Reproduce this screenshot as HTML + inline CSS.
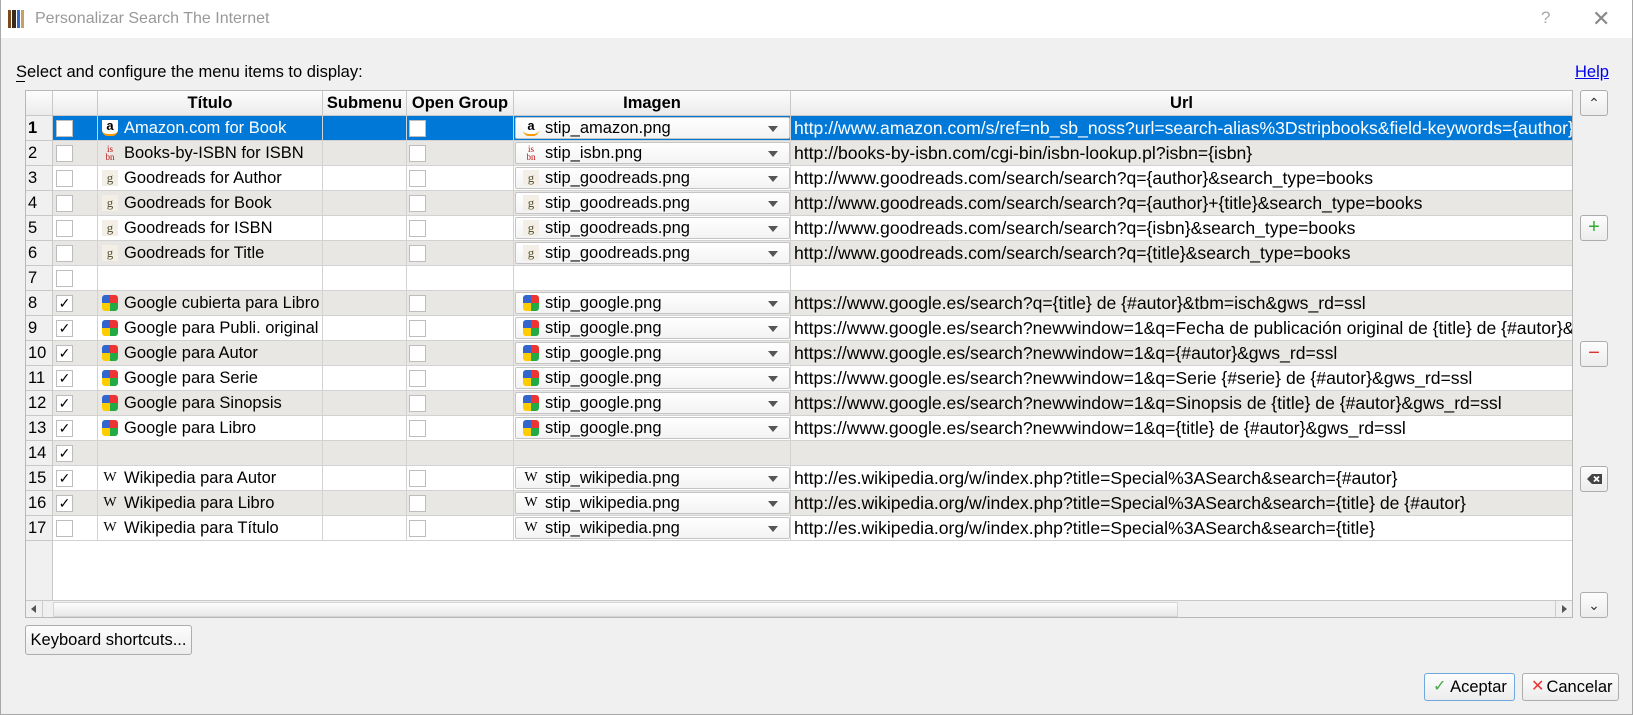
<!DOCTYPE html><html><head><meta charset="utf-8"><style>
*{box-sizing:border-box;margin:0;padding:0}
body{width:1633px;height:715px;overflow:hidden;background:#f0f0f0;font-family:"Liberation Sans",sans-serif;font-size:16.5px;color:#000;position:relative}
.tb{position:absolute;left:0;top:0;width:1633px;height:38px;background:#fff}
.win{position:absolute;left:0;top:0;width:1633px;height:715px;border:1px solid #a8a8a8;border-top:none;pointer-events:none}
.abs{position:absolute}
.tbl{position:absolute;left:25px;top:90px;width:1548px;height:528px;border:1px solid #b8b8b8;background:#fff;overflow:hidden}
.row{position:absolute;left:0;height:25px;display:flex;width:1546px}
.c{height:25px;border-right:1px solid #d2d2d2;border-bottom:1px solid #d2d2d2;white-space:nowrap;overflow:hidden;line-height:24px;position:relative}
.rh{width:27px;background:#f0f0f0;padding-left:2px;border-color:#c8c8c8}
.cb{width:45px}.ti{width:225px;padding-left:26px}.sm{width:84px}.og{width:107px}.im{width:277px}.ur{width:781px;padding-left:3px;border-right:none;font-size:17.6px}
.alt .c{background:#e9e7e3}.alt .rh{background:#f0f0f0}
.sel .c{background:#0078d7;color:#fff}.sel .rh{background:#f0f0f0;color:#000;font-weight:bold}
.chk{position:absolute;left:3px;top:4px;width:17px;height:17px;border:1px solid #bdbdbd;background:#fff;font-size:14px;line-height:15px;text-align:center;color:#000}
.og .chk{left:2px}
.hd{position:absolute;left:0;top:0;height:25px;display:flex;width:1546px}
.hd .c{background:linear-gradient(#fdfdfd,#ebebeb);font-weight:bold;text-align:center;border-color:#c8c8c8;font-size:16.5px}
.ico{position:absolute;left:4px;top:4px;width:16px;height:16px;font-size:12px;line-height:16px;text-align:center}
.combo{position:absolute;left:1px;top:1px;width:275px;height:22px;border:1px solid #c4c4c4;border-radius:2px;background:linear-gradient(#fff,#f3f3f3);color:#000;padding-left:29px;line-height:20px}
.combo .ico{left:7px;top:2px}
.combo:after{content:"";position:absolute;right:11px;top:8px;border-left:5px solid transparent;border-right:5px solid transparent;border-top:6px solid #555}
.g{background:conic-gradient(#e33 0 25%,#2a4 25% 50%,#fc0 50% 75%,#36c 75%);border-radius:3px}
.gr{background:#f3efe6;color:#553;font-family:"Liberation Serif",serif;font-size:13px}
.isbn{color:#b11;font-family:"Liberation Serif",serif;font-size:9px;line-height:8px;padding-top:0}
.wk{font-family:"Liberation Serif",serif;font-size:14px}
.am{font-weight:bold;font-size:13px;line-height:12px;border-bottom:2px solid #f90;border-radius:0 0 6px 6px;background:#fff;color:#000}
.btn{position:absolute;border:1px solid #adadad;border-radius:3px;background:linear-gradient(#fdfdfd,#ececec);text-align:center}
</style></head><body>
<div class="tb"></div>
<div class="abs" style="left:8px;top:10px;width:16px;height:18px;display:flex;gap:1px"><div style="width:4px;background:#7a4a1e"></div><div style="width:4px;background:#3a2a1a"></div><div style="width:4px;background:#3367c8"></div><div style="width:3px;background:#c8a060"></div></div>
<div class="abs" style="left:35px;top:10px;color:#999;font-size:16px">Personalizar Search The Internet</div>
<div class="abs" style="left:1541px;top:8px;color:#aaa;font-size:17px">?</div>
<div class="abs" style="left:1592px;top:6px;color:#888;font-size:22px;font-weight:300">✕</div>
<div class="abs" style="left:16px;top:63px">Select and configure the menu items to display:</div>
<div class="abs" style="left:16px;top:81px;width:9px;height:1px;background:#000"></div>
<div class="abs" style="left:1575px;top:63px;color:#00e;text-decoration:underline">Help</div>

<div class="tbl">
<div class="hd"><div class="c rh"></div><div class="c cb" style="width:45px"></div><div class="c" style="width:225px">Título</div><div class="c" style="width:84px">Submenu</div><div class="c" style="width:107px">Open Group</div><div class="c" style="width:277px">Imagen</div><div class="c" style="width:781px;border-right:none">Url</div></div>

<div class="row sel" style="top:25px"><div class="c rh">1</div><div class="c cb"><div class="chk"></div></div><div class="c ti"><div class="ico am">a</div>Amazon.com for Book</div><div class="c sm"></div><div class="c og"><div class="chk"></div></div><div class="c im"><div class="combo"><div class="ico am">a</div>stip_amazon.png</div></div><div class="c ur">http://www.amazon.com/s/ref=nb_sb_noss?url=search-alias%3Dstripbooks&amp;field-keywords={author}+{title}</div></div>

<div class="row alt" style="top:50px"><div class="c rh">2</div><div class="c cb"><div class="chk"></div></div><div class="c ti"><div class="ico isbn">is<br>bn</div>Books-by-ISBN for ISBN</div><div class="c sm"></div><div class="c og"><div class="chk"></div></div><div class="c im"><div class="combo"><div class="ico isbn">is<br>bn</div>stip_isbn.png</div></div><div class="c ur">http://books-by-isbn.com/cgi-bin/isbn-lookup.pl?isbn={isbn}</div></div>

<div class="row" style="top:75px"><div class="c rh">3</div><div class="c cb"><div class="chk"></div></div><div class="c ti"><div class="ico gr">g</div>Goodreads for Author</div><div class="c sm"></div><div class="c og"><div class="chk"></div></div><div class="c im"><div class="combo"><div class="ico gr">g</div>stip_goodreads.png</div></div><div class="c ur">http://www.goodreads.com/search/search?q={author}&amp;search_type=books</div></div>

<div class="row alt" style="top:100px"><div class="c rh">4</div><div class="c cb"><div class="chk"></div></div><div class="c ti"><div class="ico gr">g</div>Goodreads for Book</div><div class="c sm"></div><div class="c og"><div class="chk"></div></div><div class="c im"><div class="combo"><div class="ico gr">g</div>stip_goodreads.png</div></div><div class="c ur">http://www.goodreads.com/search/search?q={author}+{title}&amp;search_type=books</div></div>

<div class="row" style="top:125px"><div class="c rh">5</div><div class="c cb"><div class="chk"></div></div><div class="c ti"><div class="ico gr">g</div>Goodreads for ISBN</div><div class="c sm"></div><div class="c og"><div class="chk"></div></div><div class="c im"><div class="combo"><div class="ico gr">g</div>stip_goodreads.png</div></div><div class="c ur">http://www.goodreads.com/search/search?q={isbn}&amp;search_type=books</div></div>

<div class="row alt" style="top:150px"><div class="c rh">6</div><div class="c cb"><div class="chk"></div></div><div class="c ti"><div class="ico gr">g</div>Goodreads for Title</div><div class="c sm"></div><div class="c og"><div class="chk"></div></div><div class="c im"><div class="combo"><div class="ico gr">g</div>stip_goodreads.png</div></div><div class="c ur">http://www.goodreads.com/search/search?q={title}&amp;search_type=books</div></div>

<div class="row" style="top:175px"><div class="c rh">7</div><div class="c cb"><div class="chk"></div></div><div class="c ti"></div><div class="c sm"></div><div class="c og"></div><div class="c im"></div><div class="c ur"></div></div>

<div class="row alt" style="top:200px"><div class="c rh">8</div><div class="c cb"><div class="chk">✓</div></div><div class="c ti"><div class="ico g"></div>Google cubierta para Libro</div><div class="c sm"></div><div class="c og"><div class="chk"></div></div><div class="c im"><div class="combo"><div class="ico g"></div>stip_google.png</div></div><div class="c ur">https://www.google.es/search?q={title} de {#autor}&amp;tbm=isch&amp;gws_rd=ssl</div></div>

<div class="row" style="top:225px"><div class="c rh">9</div><div class="c cb"><div class="chk">✓</div></div><div class="c ti"><div class="ico g"></div>Google para Publi. original</div><div class="c sm"></div><div class="c og"><div class="chk"></div></div><div class="c im"><div class="combo"><div class="ico g"></div>stip_google.png</div></div><div class="c ur">https://www.google.es/search?newwindow=1&amp;q=Fecha de publicación original de {title} de {#autor}&amp;gws_rd=ssl</div></div>

<div class="row alt" style="top:250px"><div class="c rh">10</div><div class="c cb"><div class="chk">✓</div></div><div class="c ti"><div class="ico g"></div>Google para Autor</div><div class="c sm"></div><div class="c og"><div class="chk"></div></div><div class="c im"><div class="combo"><div class="ico g"></div>stip_google.png</div></div><div class="c ur">https://www.google.es/search?newwindow=1&amp;q={#autor}&amp;gws_rd=ssl</div></div>

<div class="row" style="top:275px"><div class="c rh">11</div><div class="c cb"><div class="chk">✓</div></div><div class="c ti"><div class="ico g"></div>Google para Serie</div><div class="c sm"></div><div class="c og"><div class="chk"></div></div><div class="c im"><div class="combo"><div class="ico g"></div>stip_google.png</div></div><div class="c ur">https://www.google.es/search?newwindow=1&amp;q=Serie {#serie} de {#autor}&amp;gws_rd=ssl</div></div>

<div class="row alt" style="top:300px"><div class="c rh">12</div><div class="c cb"><div class="chk">✓</div></div><div class="c ti"><div class="ico g"></div>Google para Sinopsis</div><div class="c sm"></div><div class="c og"><div class="chk"></div></div><div class="c im"><div class="combo"><div class="ico g"></div>stip_google.png</div></div><div class="c ur">https://www.google.es/search?newwindow=1&amp;q=Sinopsis de {title} de {#autor}&amp;gws_rd=ssl</div></div>

<div class="row" style="top:325px"><div class="c rh">13</div><div class="c cb"><div class="chk">✓</div></div><div class="c ti"><div class="ico g"></div>Google para Libro</div><div class="c sm"></div><div class="c og"><div class="chk"></div></div><div class="c im"><div class="combo"><div class="ico g"></div>stip_google.png</div></div><div class="c ur">https://www.google.es/search?newwindow=1&amp;q={title} de {#autor}&amp;gws_rd=ssl</div></div>

<div class="row alt" style="top:350px"><div class="c rh">14</div><div class="c cb"><div class="chk">✓</div></div><div class="c ti"></div><div class="c sm"></div><div class="c og"></div><div class="c im"></div><div class="c ur"></div></div>

<div class="row" style="top:375px"><div class="c rh">15</div><div class="c cb"><div class="chk">✓</div></div><div class="c ti"><div class="ico wk">W</div>Wikipedia para Autor</div><div class="c sm"></div><div class="c og"><div class="chk"></div></div><div class="c im"><div class="combo"><div class="ico wk">W</div>stip_wikipedia.png</div></div><div class="c ur">http://es.wikipedia.org/w/index.php?title=Special%3ASearch&amp;search={#autor}</div></div>

<div class="row alt" style="top:400px"><div class="c rh">16</div><div class="c cb"><div class="chk">✓</div></div><div class="c ti"><div class="ico wk">W</div>Wikipedia para Libro</div><div class="c sm"></div><div class="c og"><div class="chk"></div></div><div class="c im"><div class="combo"><div class="ico wk">W</div>stip_wikipedia.png</div></div><div class="c ur">http://es.wikipedia.org/w/index.php?title=Special%3ASearch&amp;search={title} de {#autor}</div></div>

<div class="row" style="top:425px"><div class="c rh">17</div><div class="c cb"><div class="chk"></div></div><div class="c ti"><div class="ico wk">W</div>Wikipedia para Título</div><div class="c sm"></div><div class="c og"><div class="chk"></div></div><div class="c im"><div class="combo"><div class="ico wk">W</div>stip_wikipedia.png</div></div><div class="c ur">http://es.wikipedia.org/w/index.php?title=Special%3ASearch&amp;search={title}</div></div>

<div class="abs" style="left:0;top:450px;width:27px;height:60px;background:#f0f0f0;border-right:1px solid #c8c8c8"></div>
<div class="abs" style="left:0;top:509px;width:1546px;height:18px;background:#f0f0f0;border-top:1px solid #c8c8c8">
 <div class="abs" style="left:0;top:0;width:17px;height:17px;border-right:1px solid #ccc"><div class="abs" style="left:5px;top:4px;border-top:4px solid transparent;border-bottom:4px solid transparent;border-right:5px solid #555"></div></div>
 <div class="abs" style="left:27px;top:1px;width:1125px;height:15px;background:linear-gradient(#fdfdfd,#e8e8e8);border:1px solid #d4d4d4"></div>
 <div class="abs" style="left:1529px;top:0;width:17px;height:17px;border-left:1px solid #ccc"><div class="abs" style="left:6px;top:4px;border-top:4px solid transparent;border-bottom:4px solid transparent;border-left:5px solid #555"></div></div>
</div>
</div>

<div class="btn" style="left:1580px;top:90px;width:28px;height:26px;font-size:14px;line-height:24px;color:#333">&#8963;</div>
<div class="btn" style="left:1580px;top:215px;width:28px;height:26px;font-size:20px;line-height:22px;color:#3a3">+</div>
<div class="btn" style="left:1580px;top:341px;width:28px;height:26px;font-size:20px;line-height:22px;color:#d33">−</div>
<div class="btn" style="left:1580px;top:466px;width:28px;height:26px">
<svg width="26" height="24" viewBox="0 0 26 24" style="position:absolute;left:0;top:0"><path d="M6 12 L11 7 H21 V17 H11 Z" fill="#444"/><path d="M13 9.5 L18 14.5 M18 9.5 L13 14.5" stroke="#fff" stroke-width="1.8"/></svg></div>
<div class="btn" style="left:1580px;top:592px;width:28px;height:26px;font-size:14px;line-height:24px;color:#333">&#8964;</div>

<div class="btn" style="left:25px;top:625px;width:167px;height:30px;line-height:28px">Keyboard shortcuts...</div>
<div class="btn" style="left:1424px;top:673px;width:91px;height:28px;line-height:26px;border-color:#6ea8dc;padding-left:18px"><span class="abs" style="left:8px;top:0;color:#4a4;font-size:16px">✓</span>Aceptar</div>
<div class="btn" style="left:1522px;top:673px;width:97px;height:28px;line-height:26px;padding-left:18px"><span class="abs" style="left:8px;top:0;color:#e33;font-size:16px">✕</span>Cancelar</div>
<div class="win"></div>
</body></html>
